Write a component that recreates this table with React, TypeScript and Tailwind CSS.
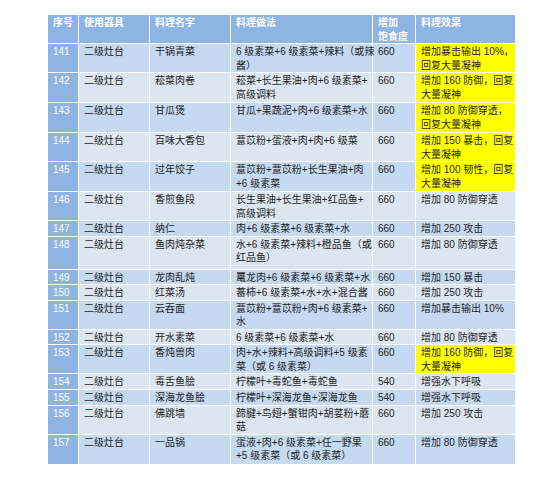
import React from 'react';

// --- Data ---
type Row = {
  id: number;
  name: string;
  recipe: string[];
  food: string;
  effect: string[];
  hot?: boolean;
  h: string;
};

const rows: Row[] = [
  { id: 141, name: '干锅青菜', recipe: ['6 级素菜+6 级素菜+辣料（或辣', '酱）'], food: '660', effect: ['增加暴击输出 10%，', '回复大量凝神'], hot: true, h: 'h-[29px]' },
  { id: 142, name: '菘菜肉卷', recipe: ['菘菜+长生果油+肉+6 级素菜+', '高级调料'], food: '660', effect: ['增加 160 防御，回复', '大量凝神'], hot: true, h: 'h-[30px]' },
  { id: 143, name: '甘瓜煲', recipe: ['甘瓜+果蔬泥+肉+6 级素菜+水'], food: '660', effect: ['增加 80 防御穿透，', '回复大量凝神'], hot: true, h: 'h-[30px]' },
  { id: 144, name: '百味大香包', recipe: ['薏苡粉+蛋液+肉+肉+6 级菜'], food: '660', effect: ['增加 150 暴击，回复', '大量凝神'], hot: true, h: 'h-[29px]' },
  { id: 145, name: '过年饺子', recipe: ['薏苡粉+薏苡粉+长生果油+肉', '+6 级素菜'], food: '660', effect: ['增加 100 韧性，回复', '大量凝神'], hot: true, h: 'h-[30px]' },
  { id: 146, name: '香煎鱼段', recipe: ['长生果油+长生果油+红品鱼+', '高级调料'], food: '660', effect: ['增加 80 防御穿透'], h: 'h-[29px]' },
  { id: 147, name: '纳仁', recipe: ['肉+6 级素菜+6 级素菜+水'], food: '660', effect: ['增加 250 攻击'], h: 'h-[15px]' },
  { id: 148, name: '鱼肉炖杂菜', recipe: ['水+6 级素菜+辣料+橙品鱼（或', '红品鱼）'], food: '660', effect: ['增加 80 防御穿透'], h: 'h-[33px]' },
  { id: 149, name: '龙肉乱炖', recipe: ['鼍龙肉+6 级素菜+6 级素菜+水'], food: '660', effect: ['增加 150 暴击'], h: 'h-[14px]' },
  { id: 150, name: '红菜汤', recipe: ['蕃柿+6 级素菜+水+水+混合酱'], food: '660', effect: ['增加 250 攻击'], h: 'h-[14px]' },
  { id: 151, name: '云吞面', recipe: ['薏苡粉+薏苡粉+肉+6 级素菜+', '水'], food: '660', effect: ['增加暴击输出 10%'], h: 'h-[29px]' },
  { id: 152, name: '开水素菜', recipe: ['6 级素菜+6 级素菜+水'], food: '660', effect: ['增加 80 防御穿透'], h: 'h-[15px]' },
  { id: 153, name: '香炖兽肉', recipe: ['肉+水+辣料+高级调料+5 级素', '菜（或 6 级素菜）'], food: '660', effect: ['增加 160 防御，回复', '大量凝神'], hot: true, h: 'h-[29px]' },
  { id: 154, name: '毒舌鱼脍', recipe: ['柠檬叶+毒蛇鱼+毒蛇鱼'], food: '540', effect: ['增强水下呼吸'], h: 'h-[16px]' },
  { id: 155, name: '深海龙鱼脍', recipe: ['柠檬叶+深海龙鱼+深海龙鱼'], food: '540', effect: ['增强水下呼吸'], h: 'h-[14px]' },
  { id: 156, name: '佛跳墙', recipe: ['蹄腱+鸟翅+蟹钳肉+胡荽粉+蘑', '菇'], food: '660', effect: ['增加 250 攻击'], h: 'h-[29px]' },
  { id: 157, name: '一品锅', recipe: ['蛋液+肉+6 级素菜+任一野果', '+5 级素菜（或 6 级素菜）'], food: '660', effect: ['增加 80 防御穿透'], h: 'h-[30px]' },
];

const Lines = ({ lines }: { lines: string[] }) => (
  <>
    {lines.map((l, i) => (
      <div key={i}>{l}</div>
    ))}
  </>
);

export default function App() {
  const cell = 'align-top border border-white px-[5px] pt-[1px] pb-0 whitespace-nowrap';
  const head = 'align-top border border-white px-[5px] pt-[1px] text-left font-bold text-white bg-[#8db4e2]';

  return (
    <div className="w-[550px] h-[480px] bg-white pt-[14px] pl-[47px] font-['Liberation_Sans','Noto_Sans_CJK_SC',sans-serif] text-[10px] leading-[13.5px] text-[#1f1f1f]">
      <table className="table-fixed border-collapse w-[468px]">
        <colgroup>
          <col className="w-[31px]" />
          <col className="w-[71px]" />
          <col className="w-[81px]" />
          <col className="w-[142px]" />
          <col className="w-[43px]" />
          <col className="w-[100px]" />
        </colgroup>
        <thead>
          <tr className="h-[29px]">
            <th className={`${head} px-[4px]`}>序号</th>
            <th className={head}>使用器具</th>
            <th className={head}>料理名字</th>
            <th className={head}>料理做法</th>
            <th className={head}>增加<br />饱食度</th>
            <th className={head}>料理效果</th>
          </tr>
        </thead>
        <tbody>
          {rows.map(r => {
            const bg = r.id % 2 === 1 ? 'bg-[#c5d9f1]' : 'bg-[#dce6f1]';
            return (
              <tr key={r.id} className={r.h}>
                <td className={`${cell} px-[4px] bg-[#8db4e2] text-white`}>{r.id}</td>
                <td className={`${cell} ${bg}`}>二级灶台</td>
                <td className={`${cell} ${bg}`}>{r.name}</td>
                <td className={`${cell} ${bg}`}><Lines lines={r.recipe} /></td>
                <td className={`${cell} ${bg}`}>{r.food}</td>
                <td className={`${cell} ${r.hot ? 'bg-[#ffff00]' : bg}`}><Lines lines={r.effect} /></td>
              </tr>
            );
          })}
        </tbody>
      </table>
    </div>
  );
}
